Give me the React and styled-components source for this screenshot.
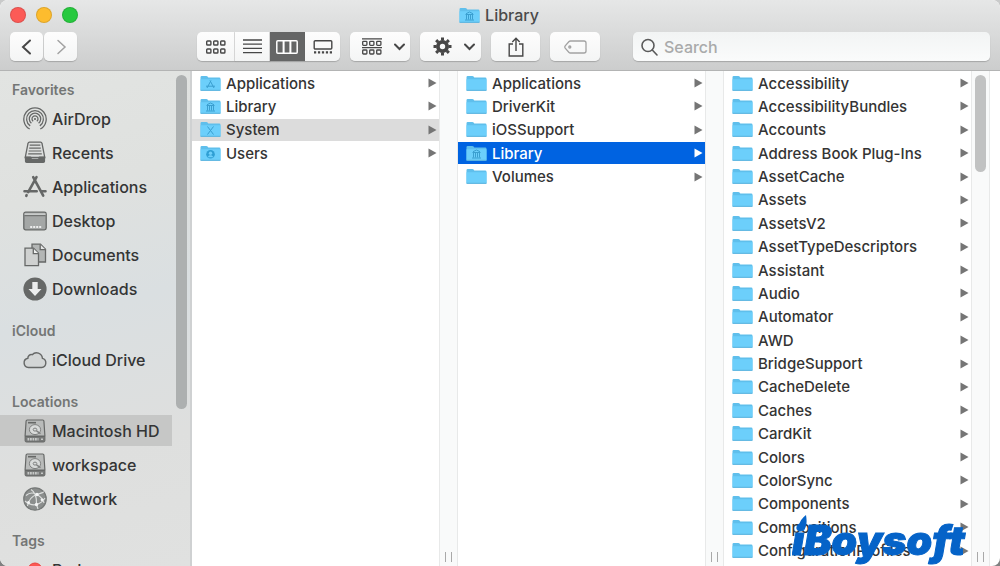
import React from 'react';
import styled, { createGlobalStyle, css } from 'styled-components';

const GlobalStyle = createGlobalStyle`
  * { box-sizing: border-box; }
  body {
    margin: 0;
    background: linear-gradient(#c9caca, #808181);
    font-family: Inter, "Liberation Sans", sans-serif;
    font-weight: 500;
    color: #343434;
  }
  ul { list-style: none; margin: 0; padding: 0; }
  button, input { font: inherit; color: inherit; }
`;

const Window = styled.div`
  display: flex;
  flex-direction: column;
  height: 100vh;
  overflow: hidden;
  border-radius: 8px;
  background: #fff;
`;

const Header = styled.header`
  flex: none;
  padding-bottom: 9px;
  background: linear-gradient(#e6e7e7, #d9dada 50%, #cccdcd);
  border-bottom: 1px solid #b3b4b4;
`;

const TitleBar = styled.div`
  display: grid;
  grid-template-columns: 1fr auto 1fr;
  align-items: start;
  height: 32px;
  padding: 0 10px;
`;

const Lights = styled.div`
  display: flex;
  gap: 10px;
  padding-top: 7px;
`;

const Light = styled.button`
  width: 16px;
  height: 16px;
  padding: 0;
  border: 1px solid rgba(0, 0, 0, 0.12);
  border-radius: 50%;
  background: ${p => p.$color};
`;

const Title = styled.h1`
  display: flex;
  align-items: center;
  gap: 5px;
  height: 30px;
  margin: 0;
  padding-right: 2px;
  font-size: 16px;
  font-weight: 500;
  color: #4a4a4a;
`;

const Toolbar = styled.div`
  display: flex;
  height: 29px;
  padding: 0 10px;
`;

const ButtonGroup = styled.div`
  display: flex;
  gap: ${p => p.$gap || 0}px;
  margin-right: ${p => p.$after || 10}px;
`;

const ToolButton = styled.button`
  display: flex;
  align-items: center;
  justify-content: center;
  width: ${p => p.$width}px;
  padding: 0;
  border: 0;
  border-radius: 5px;
  background: linear-gradient(#fdfdfd, #f4f5f5);
  box-shadow: 0 1px 1px rgba(0, 0, 0, 0.2);
  color: ${p => (p.$dim ? '#a2a2a2' : '#474747')};
`;

const MenuButton = styled(ToolButton)`
  gap: 12px;
  padding-left: 6px;
`;

const Segment = styled(ToolButton)`
  border-radius: 0;
  border-right: 1px solid #dcdcdc;
  &:first-child { border-radius: 5px 0 0 5px; }
  &:last-child { border-radius: 0 5px 5px 0; border-right: 0; }
  ${p => p.$active && css`
    background: #656666;
    color: #fff;
    border-color: #656666;
  `}
`;

const SearchBox = styled.label`
  display: flex;
  flex: 1;
  align-items: center;
  gap: 6px;
  padding-left: 8px;
  border-radius: 5px;
  background: linear-gradient(#f2f4f4, #fafbfb);
  box-shadow: 0 1px 1px rgba(0, 0, 0, 0.2);
  color: #5a5a5a;
  input {
    flex: 1;
    min-width: 0;
    padding: 0;
    border: 0;
    outline: 0;
    background: none;
    font-size: 16px;
  }
  input::placeholder { color: #a9aaaa; opacity: 1; }
`;

const Body = styled.div`
  flex: 1;
  min-height: 0;
  display: grid;
  grid-template-columns: 192px repeat(3, minmax(0, 1fr)) 10px;
`;

const Sidebar = styled.nav`
  display: flex;
  min-height: 0;
  overflow: hidden;
  background: linear-gradient(165deg, #e2e4e2 0%, #dfe1df 25%, #dadfe1 48%, #dedfde 75%, #e0e1e0 100%);
  border-right: 2px solid #cfd1d2;
`;

const Places = styled.div`
  flex: 1;
  display: flex;
  flex-direction: column;
  gap: 17px;
  padding-top: 9px;
  min-width: 0;
`;

const PlaceGroup = styled.section`
  display: flex;
  flex-direction: column;
  gap: 3px;
  ul {
    display: flex;
    flex-direction: column;
    gap: 3px;
  }
`;

const GroupName = styled.h2`
  margin: 0;
  padding-left: 12px;
  font-size: 14px;
  line-height: 20px;
  font-weight: 600;
  color: #747675;
`;

const Place = styled.a`
  display: flex;
  align-items: center;
  gap: 5px;
  height: 31px;
  padding-left: 23px;
  font-size: 16px;
  color: #343535;
  white-space: nowrap;
  text-decoration: none;
  background: ${p => (p.$active ? '#c6c7c6' : 'none')};
  svg { flex: none; }
`;

const SideTrack = styled.div`
  flex: none;
  width: 18px;
  padding: 4px 3px 0 4px;
`;

const Thumb = styled.div`
  width: 11px;
  height: ${p => p.$height}%;
  border-radius: 6px;
  background: ${p => p.$color};
`;

const Column = styled.section`
  display: flex;
  min-width: 0;
  min-height: 0;
`;

const FileList = styled.ul`
  flex: 1;
  min-width: 0;
  display: grid;
  grid-template-rows: repeat(21, minmax(22px, 1fr));
  padding-bottom: 4px;
`;

const FileRow = styled.a`
  display: grid;
  grid-template-columns: 21px minmax(0, 1fr) 9px;
  align-items: center;
  gap: 5px;
  height: 22px;
  margin-top: 1px;
  padding: 0 2px 0 8px;
  font-size: 15px;
  white-space: nowrap;
  text-decoration: none;
  color: ${p => (p.$selected ? '#fff' : '#343434')};
  background: ${p => (p.$selected ? '#0063e1' : p.$open ? '#dcdcdc' : 'none')};
`;

const Track = styled.div`
  flex: none;
  display: flex;
  flex-direction: column;
  justify-content: space-between;
  align-items: center;
  width: 19px;
  padding: 4px 0 4px;
  background: #f9fafa;
  border: solid #e8e9e9;
  border-width: 0 1px;
`;

const Grip = styled.div`
  width: 7px;
  height: 10px;
  margin-top: auto;
  border: solid #a9a9a9;
  border-width: 0 1px;
`;

const Brand = styled.div`
  position: fixed;
  right: 28px;
  bottom: 0;
  svg { display: block; }
`;

const BrandText = styled.text`
  font-family: Inter, "Open Sans", sans-serif;
  font-weight: 900;
  font-style: italic;
  font-size: 41px;
  stroke: #0563c8;
  stroke-width: 1px;
`;

const Emblem = ({ kind }) => {
  if (kind === 'library') {
    return <path d="M6.5 7.500h8M7 6.700l3.500-1.700 3.500 1.700M7.500 8v4.500M9.500 8v4.500M11.500 8v4.500M13.500 8v4.500M6 13h9" />;
  }
  if (kind === 'apps') return <path d="M11 5.500L7 13M10 5.500l4 7.500M6 11.200h9" />;
  if (kind === 'system') return <path d="M7.500 5.500l6 8M13.500 5.500l-6 8" />;
  if (kind === 'users') {
    return (
      <>
        <circle cx="10.500" cy="9.300" r="4.300" fill="#2f9fd4" stroke="none" />
        <circle cx="10.500" cy="8.300" r="1.700" fill="#6fd0fb" stroke="none" />
        <path d="M7.900 12.300c.6-2.300 4.600-2.300 5.200 0" fill="#6fd0fb" stroke="#6fd0fb" strokeWidth="0.600" />
      </>
    );
  }
  return null;
};

const Folder = ({ kind }) => (
  <svg width="21" height="17" viewBox="0 0 21 17" aria-hidden="true">
    <path d="M.5 2.200Q.5 1 1.700 1h4.600q.8 0 1.300.6l.7.900h10.900q1.300 0 1.300 1.200V15H.5z" fill="#5fbfec" />
    <path d="M.5 4.200h20v10.600q0 1-1 1h-18q-1 0-1-1z" fill="#6ccffb" />
    <path d="M.5 15.300h20" stroke="#5ab2dd" strokeWidth="1" />
    <g fill="none" stroke="#3a9fd0" strokeWidth="1"><Emblem kind={kind} /></g>
  </svg>
);

const RowArrow = ({ color }) => (
  <svg width="9" height="10" viewBox="0 0 9 10" aria-hidden="true">
    <path d="M.5.500L8.500 5 .5 9.500z" fill={color} />
  </svg>
);

const Chevron = ({ d, w = 12, h = 16, stroke = 2 }) => (
  <svg width={w} height={h} viewBox={`0 0 ${w} ${h}`} fill="none" stroke="currentColor" strokeWidth={stroke} strokeLinecap="round" aria-hidden="true">
    <path d={d} />
  </svg>
);

const Down = () => <Chevron d="M1 1.500l4.500 4.500L10 1.500" w={11} h={8} />;

const Squares = ({ top, pitch = 8 }) => (
  <>
    {[0.700, 7.700, 14.700].map(x => (
      <React.Fragment key={x}>
        <rect x={x} y={top} width="4.200" height="4" rx="0.800" />
        <rect x={x} y={top + pitch} width="4.200" height="4" rx="0.800" />
      </React.Fragment>
    ))}
  </>
);

const IconView = () => (
  <svg width="20" height="14" viewBox="0 0 20 14" fill="none" stroke="currentColor" strokeWidth="1.400"><Squares top={1} /></svg>
);

const ListView = () => (
  <svg width="19" height="15" viewBox="0 0 19 15" stroke="currentColor" strokeWidth="1.300"><path d="M0 1h19M0 5.200h19M0 9.400h19M0 13.600h19" /></svg>
);

const ColumnView = () => (
  <svg width="22" height="14" viewBox="0 0 22 14" fill="none" stroke="currentColor">
    <rect x=".8" y=".8" width="20.400" height="12.400" rx="1" strokeWidth="1.500" />
    <path d="M7.600 1v12M14.400 1v12" strokeWidth="2" />
  </svg>
);

const GalleryView = () => (
  <svg width="20" height="14" viewBox="0 0 20 14" fill="none" stroke="currentColor" strokeWidth="1.400">
    <rect x="1.200" y=".7" width="17.600" height="8.300" rx="1" />
    <path d="M1 12.400h18" strokeWidth="2.200" strokeDasharray="2.200 1.750" />
  </svg>
);

const ArrangeIcon = () => (
  <svg width="20" height="18" viewBox="0 0 20 18" fill="none" stroke="currentColor" strokeWidth="1.300">
    <path d="M0 .9h20M0 9.600h20" />
    <Squares top={3.300} pitch={8.700} />
  </svg>
);

const GearIcon = () => (
  <svg width="19" height="19" viewBox="0 0 19 19" fill="none" stroke="currentColor">
    <circle cx="9.500" cy="9.500" r="4.600" strokeWidth="3.800" />
    <g strokeWidth="3">
      {[0, 45, 90, 135].map(a => (
        <path key={a} d="M9.500.500v3M9.500 15.500v3" transform={`rotate(${a} 9.500 9.500)`} />
      ))}
    </g>
  </svg>
);

const ShareIcon = () => (
  <svg width="16" height="20" viewBox="0 0 16 20" fill="none" stroke="currentColor" strokeWidth="1.400">
    <path d="M5 7H1.200v12h13.600V7H11M8 14V1.300M4.300 4.900L8 1.200l3.700 3.700" />
  </svg>
);

const TagIcon = () => (
  <svg width="23" height="14" viewBox="0 0 23 14" fill="none" stroke="currentColor" strokeWidth="1.300">
    <path d="M6.500 1H20q2 0 2 2v8q0 2-2 2H6.500q-1 0-1.700-.8L1.200 8.200q-.8-1.200 0-2.400l3.600-4Q5.500 1 6.500 1z" />
    <circle cx="5.800" cy="7" r="1" />
  </svg>
);

const SearchIcon = () => (
  <svg width="17" height="18" viewBox="0 0 17 18" fill="none" stroke="currentColor" strokeWidth="1.600" aria-hidden="true">
    <circle cx="7" cy="7.500" r="6" />
    <path d="M11.300 12l4.700 5" strokeLinecap="round" />
  </svg>
);

const PlaceIcon = ({ children }) => (
  <svg width="24" height="24" viewBox="0 0 24 24" fill="none" stroke="#666867" strokeWidth="1.300" aria-hidden="true">{children}</svg>
);

const disk = (
  <>
    <path d="M4.200 1h15.600q1 0 1.100 1l1 15H2.100l1-15Q3.200 1 4.200 1z" fill="#b9bbba" strokeWidth="1.200" />
    <path d="M2.100 17.500h19.800v4.200q0 1.300-1.300 1.300H3.400q-1.300 0-1.300-1.300z" fill="#777978" strokeWidth="1" />
    <ellipse cx="12" cy="10.600" rx="5.600" ry="5" fill="#d9dbda" stroke="#7f8180" strokeWidth="1" />
    <ellipse cx="12" cy="10.600" rx="1.800" ry="1.500" stroke="#7f8180" strokeWidth="1" />
    <path d="M13.500 11.800l4 2.900" stroke="#7f8180" strokeWidth="1.500" />
    <path d="M5 3.700h8" strokeWidth="1.600" />
    <path d="M4.500 20.200h11" stroke="#c6c8c7" strokeWidth="2.600" strokeDasharray="1.800 .7" />
    <path d="M18 20.200h2" stroke="#c6c8c7" strokeWidth="1.500" />
  </>
);

const icons = {
  airdrop: (
    <>
      <path d="M6.700 22A11.200 11.200 0 1 1 17.300 22" />
      <path d="M7.200 18.900A8.400 8.400 0 1 1 16.800 18.900" />
      <path d="M8.400 16.300A5.700 5.700 0 1 1 15.600 16.300" />
      <path d="M10.200 14.300A3 3 0 1 1 13.800 14.300" />
      <circle cx="12" cy="12" r="1.100" fill="#666867" stroke="none" />
    </>
  ),
  recents: (
    <>
      <path d="M5 2.500q.2-1.300 1.500-1.300h11q1.300 0 1.500 1.300l2.800 14H2.200z" fill="#dcdedd" />
      <path d="M6.700 4.200h10.600M6.200 7.100h11.600M5.700 10h12.600M5.200 12.900h13.600" strokeWidth="1.200" />
      <path d="M1.900 15.500h5.600q.8 0 1 .9l.3 1.300h6.400l.3-1.300q.2-.9 1-.9h5.600v4.800q0 1.700-1.700 1.700H3.600q-1.700 0-1.700-1.700z" fill="#666867" stroke="none" />
    </>
  ),
  apps: (
    <g strokeWidth="2.600" strokeLinecap="round">
      <path d="M13.500 2.200L5.200 17.200M3.600 20.200l-.3.600M10.200 2.200l10 18.500" />
      <path d="M1.500 16.200h12.200M18.500 16.200h4" />
    </g>
  ),
  desktop: (
    <>
      <rect x=".8" y="3.200" width="22.400" height="17.600" rx="1.800" fill="#a4a7a6" />
      <path d="M1.500 5.200h21" stroke="#d5d7d6" strokeWidth="1.300" />
      <path d="M1.500 6.700h21" strokeWidth="1" />
      <path d="M7.200 18h11" stroke="#eceded" strokeWidth="2" strokeDasharray="2 1" />
    </>
  ),
  documents: (
    <>
      <path d="M9 1.200h8.500l5 5V19H9z" fill="#b3b6b5" />
      <path d="M17.200 1.400v5.200h5.200" fill="#e4e6e5" />
      <path d="M2 5.200h8.500l5 5v12.500H2z" fill="#cfd1d0" />
      <path d="M10.300 5.400v5.200h5.200" fill="#eef0ef" />
    </>
  ),
  downloads: (
    <>
      <circle cx="12" cy="12" r="11.600" fill="#666867" stroke="none" />
      <path d="M9.300 5h5.400v7H18.500L12 19 5.500 12H9.300z" fill="#eceded" stroke="none" />
    </>
  ),
  cloud: <path d="M5.500 19.500a4.700 4.700 0 0 1-.6-9.300 3.400 3.400 0 0 1 4.300-3.500A5.900 5.900 0 0 1 19.400 10.300 4.700 4.700 0 0 1 18.600 19.500z" strokeWidth="1.400" fill="#d3d6d6" />,
  disk,
  network: (
    <>
      <circle cx="12" cy="12" r="11.200" fill="#8b8e8d" stroke="#777a79" />
      <g stroke="#dfe1e0" strokeWidth="1.100">
        <path d="M3 8.500Q8 4 14 7.500T21 16M8 2.500Q14 6 13.500 17.500M2 14Q8 19 13.500 17.500T22 11M4.500 19Q6 10 14 7.500T20 5M13.500 17.500L15 22" />
      </g>
      <g fill="#f3f4f4" stroke="none">
        <circle cx="14" cy="7.500" r="1.700" />
        <circle cx="13.500" cy="17.500" r="1.700" />
        <circle cx="5.500" cy="15.500" r="1.500" />
        <circle cx="19" cy="12.800" r="1.400" />
      </g>
    </>
  ),
  red: <circle cx="12" cy="12" r="7" fill="#fc5753" stroke="#e8453f" strokeWidth="1" />,
};

const places = [
  { name: 'Favorites', items: [['AirDrop', 'airdrop'], ['Recents', 'recents'], ['Applications', 'apps'], ['Desktop', 'desktop'], ['Documents', 'documents'], ['Downloads', 'downloads']] },
  { name: 'iCloud', items: [['iCloud Drive', 'cloud']] },
  { name: 'Locations', items: [['Macintosh HD', 'disk'], ['workspace', 'disk'], ['Network', 'network']] },
  { name: 'Tags', items: [['Red', 'red']] },
];

const root = [
  { name: 'Applications', kind: 'apps' },
  { name: 'Library', kind: 'library' },
  { name: 'System', kind: 'system', open: true },
  { name: 'Users', kind: 'users' },
];

const system = [
  { name: 'Applications' },
  { name: 'DriverKit' },
  { name: 'iOSSupport' },
  { name: 'Library', kind: 'library', selected: true },
  { name: 'Volumes' },
];

const library = [
  'Accessibility', 'AccessibilityBundles', 'Accounts', 'Address Book Plug-Ins', 'AssetCache',
  'Assets', 'AssetsV2', 'AssetTypeDescriptors', 'Assistant', 'Audio', 'Automator', 'AWD',
  'BridgeSupport', 'CacheDelete', 'Caches', 'CardKit', 'Colors', 'ColorSync', 'Components',
  'Compositions', 'ConfigurationProfiles',
].map(name => ({ name }));

const FileColumn = ({ label, files, scroll }) => (
  <Column aria-label={label}>
    <FileList>
      {files.map(f => (
        <li key={f.name}>
          <FileRow href="#" $open={f.open} $selected={f.selected}>
            <Folder kind={f.kind} />
            <span>{f.name}</span>
            <RowArrow color={f.selected ? '#fff' : '#757575'} />
          </FileRow>
        </li>
      ))}
    </FileList>
    <Track>
      {scroll && <Thumb $height={20} $color="#c1c2c2" />}
      <Grip />
    </Track>
  </Column>
);

const App = () => (
  <>
    <GlobalStyle />
    <Window>
      <Header>
        <TitleBar>
          <Lights>
            <Light $color="#fc5b57" aria-label="Close" />
            <Light $color="#fdbc2e" aria-label="Minimize" />
            <Light $color="#27c93f" aria-label="Zoom" />
          </Lights>
          <Title><Folder kind="library" />Library</Title>
        </TitleBar>
        <Toolbar>
          <ButtonGroup $gap={1} $after={120}>
            <ToolButton $width={33} aria-label="Back"><Chevron d="M9 1.500L2 8l7 6.500" /></ToolButton>
            <ToolButton $width={33} $dim aria-label="Forward"><Chevron d="M3 1.500L10 8l-7 6.500" stroke={1.500} /></ToolButton>
          </ButtonGroup>
          <ButtonGroup>
            <Segment $width={38} aria-label="Icons"><IconView /></Segment>
            <Segment $width={35} aria-label="List"><ListView /></Segment>
            <Segment $width={35} $active aria-label="Columns"><ColumnView /></Segment>
            <Segment $width={35} aria-label="Gallery"><GalleryView /></Segment>
          </ButtonGroup>
          <ButtonGroup>
            <MenuButton $width={60} aria-label="Group"><ArrangeIcon /><Down /></MenuButton>
          </ButtonGroup>
          <ButtonGroup>
            <MenuButton $width={61} aria-label="Actions"><GearIcon /><Down /></MenuButton>
          </ButtonGroup>
          <ButtonGroup>
            <ToolButton $width={49} aria-label="Share"><ShareIcon /></ToolButton>
          </ButtonGroup>
          <ButtonGroup $after={33}>
            <ToolButton $width={50} $dim aria-label="Tags"><TagIcon /></ToolButton>
          </ButtonGroup>
          <SearchBox>
            <SearchIcon />
            <input type="text" placeholder="Search" aria-label="Search" />
          </SearchBox>
        </Toolbar>
      </Header>
      <Body>
        <Sidebar>
          <Places>
            {places.map(g => (
              <PlaceGroup key={g.name}>
                <GroupName>{g.name}</GroupName>
                <ul>
                  {g.items.map(([name, icon]) => (
                    <li key={name}>
                      <Place href="#" $active={name === 'Macintosh HD'}>
                        <PlaceIcon>{icons[icon]}</PlaceIcon>
                        {name}
                      </Place>
                    </li>
                  ))}
                </ul>
              </PlaceGroup>
            ))}
          </Places>
          <SideTrack><Thumb $height={68} $color="#adb0b0" /></SideTrack>
        </Sidebar>
        <FileColumn label="Macintosh HD" files={root} />
        <FileColumn label="System" files={system} />
        <FileColumn label="Library" files={library} scroll />
      </Body>
    </Window>
    <Brand>
      <svg width="180" height="54" viewBox="0 0 180 54" fill="#0563c8" role="img" aria-label="iBoysoft">
        <path d="M14 3q-6 4.500-7 10.500-.8 3 1 5 5-1.500 6-4.500 1.200-4 0-11z" />
        <BrandText x="0" y="43">iBoysoft</BrandText>
      </svg>
    </Brand>
  </>
);

export default App;
